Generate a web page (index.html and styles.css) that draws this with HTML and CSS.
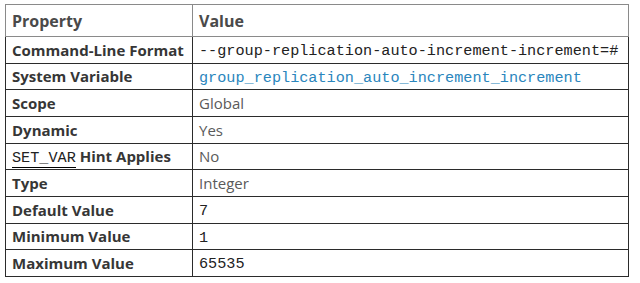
FILE: index.html
```html
<!doctype html>
<html lang="en">
  <head>
    <meta charset="UTF-8" />
    <title>Group Replication option</title>
    <link rel="stylesheet" href="styles.css">
  </head>
  <body>
    <div class="wrap">
      <table class="props">
        <thead>
          <tr>
            <th class="col-name">Property</th>
            <th>Value</th>
          </tr>
        </thead>
        <tbody>
          <tr>
            <th>Command-Line Format</th>
            <td><code class="literal">--group-replication-auto-increment-increment=#</code></td>
          </tr>
          <tr>
            <th>System Variable</th>
            <td><a href="#" class="literal link">group_replication_auto_increment_increment</a></td>
          </tr>
          <tr>
            <th>Scope</th>
            <td>Global</td>
          </tr>
          <tr>
            <th>Dynamic</th>
            <td>Yes</td>
          </tr>
          <tr>
            <th><a href="#" class="literal hint">SET_VAR</a> Hint Applies</th>
            <td>No</td>
          </tr>
          <tr>
            <th>Type</th>
            <td>Integer</td>
          </tr>
          <tr>
            <th>Default Value</th>
            <td><code class="literal">7</code></td>
          </tr>
          <tr>
            <th>Minimum Value</th>
            <td><code class="literal">1</code></td>
          </tr>
          <tr>
            <th>Maximum Value</th>
            <td><code class="literal">65535</code></td>
          </tr>
        </tbody>
      </table>
    </div>
  </body>
</html>
```

FILE: styles.css
```css
/* Colours picked from the docs theme */
:root {
  --text: #5a5a5a;
  --label: #363636;
  --code: #222222;
  --link: #2a86bd;
  --rule-dark: #2b2b2b;
  --rule-light: #8a8a8a;
}

body {
  margin: 0;
  background: #ffffff;
  color: var(--text);
  font-family: "Open Sans", "Liberation Sans", sans-serif;
  font-size: 15px;
}

.wrap {
  padding: 4px 11px 0 5px;
}

/* Property table */
.props {
  width: 624px;
  border-collapse: collapse;
}

.props th,
.props td {
  text-align: left;
  vertical-align: middle;
  padding: 0 6px;
  line-height: 18px;
  border: 1px solid var(--rule-dark);
}

.props tbody tr {
  height: 26.67px;
}

.props thead tr {
  height: 32px;
}

.props thead th {
  font-size: 16px;
  font-weight: 700;
  color: #4a4a4a;
  line-height: 20px;
  border: 1px solid var(--rule-light);
}

.props .col-name {
  width: 174px;
}

.props tbody th {
  font-weight: 700;
  color: var(--label);
  white-space: nowrap;
}

.props td {
  color: var(--text);
}

/* Monospace values */
.literal {
  font-family: "Liberation Mono", "Courier New", monospace;
  font-size: 15.2px;
  font-weight: 400;
  line-height: 1;
  color: var(--code);
}

.link {
  color: var(--link);
  text-decoration: none;
}

.hint {
  color: var(--code);
  text-decoration: none;
  border-bottom: 1px solid #000000;
}
```
